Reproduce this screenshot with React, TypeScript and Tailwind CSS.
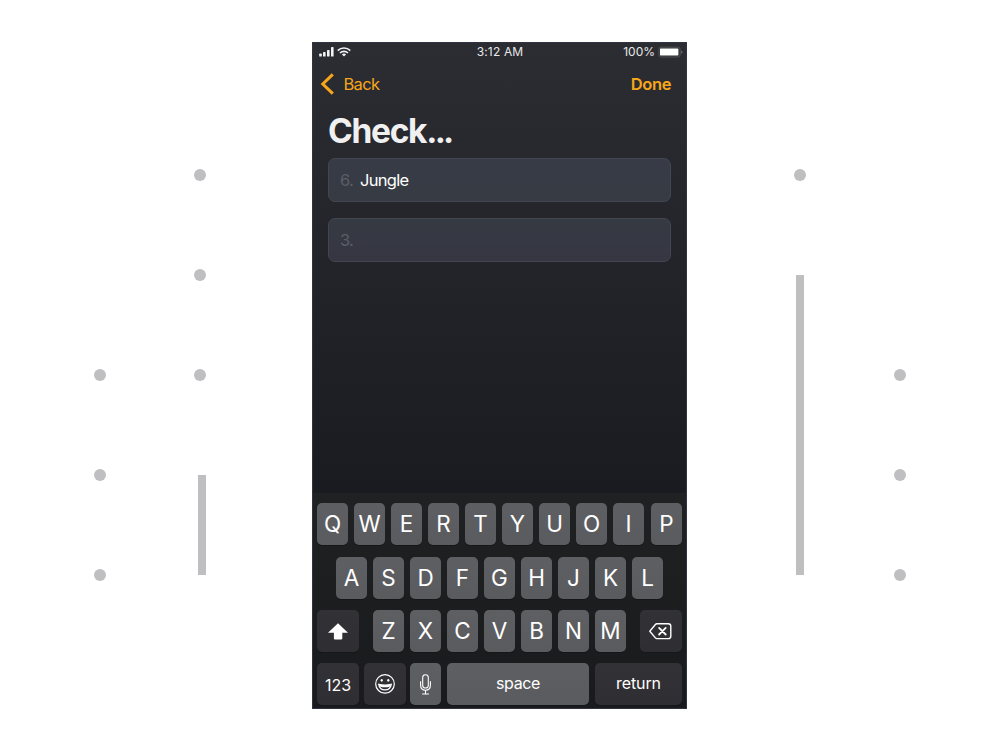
import React from "react";

const dot = "h-3 w-3 shrink-0 rounded-full bg-[#bfbfc1]";
const label = "flex items-center justify-center whitespace-nowrap";
const lightKey =
  "flex h-[42px] w-[31px] shrink-0 items-center justify-center rounded-[5px] bg-gradient-to-b from-[#5e5f62] to-[#5a5b5e] shadow-[0_1px_0_#151618]";
const darkKey =
  "flex h-[42px] shrink-0 items-center justify-center rounded-[5px] bg-gradient-to-b from-[#323135] to-[#2f2e33] shadow-[0_1px_0_#151618]";

function LetterKey({ letter }: { letter: string }) {
  return (
    <div className={lightKey}>
      <span className="text-[22.5px] font-normal leading-[42px] text-white">{letter}</span>
    </div>
  );
}

function StatusBar() {
  return (
    <div className="flex h-5 items-center justify-between pl-[6px] pr-[3px] text-[12px] leading-5 tracking-[0.1px] text-[#e8e8ea]">
      <div className="flex w-[120px] items-center gap-[3px]">
        <svg width="16" height="10" viewBox="0 0 16 10" fill="#f2f2f4">
          <rect x="0.2" y="6.6" width="2.6" height="3" rx="0.7" />
          <rect x="4" y="5" width="2.6" height="4.6" rx="0.7" />
          <rect x="8" y="3" width="2.6" height="6.6" rx="0.7" />
          <rect x="12" y="0.1" width="2.6" height="9.5" rx="0.7" />
        </svg>
        <svg className="-ml-px" width="14" height="10" viewBox="0 0 14 10" fill="none" stroke="#f2f2f4" strokeWidth="1.6">
          <path d="M0.7 3.6C4.2 0.1 9.8 0.1 13.3 3.6" />
          <path d="M3 6C5.2 3.8 8.8 3.8 11 6" />
          <path d="M7 9.5L4.9 7.4C6.1 6.3 7.9 6.3 9.1 7.4Z" fill="#f2f2f4" stroke="none" />
        </svg>
      </div>
      <span className="-translate-x-px tracking-[0.15px]">3:12 AM</span>
      <div className="flex w-[120px] items-center justify-end gap-[3px]">
        <span className="tracking-[0]">100%</span>
        <svg width="25" height="12" viewBox="0 0 25 12">
          <rect x="0.9" y="1.2" width="21.2" height="9.8" rx="2" fill="none" stroke="#505155" />
          <rect x="2" y="2.4" width="18.4" height="7" rx="0.6" fill="#fff" />
          <path d="M23.4 4.4C24.7 5 24.7 7.2 23.4 7.8Z" fill="#85868a" />
        </svg>
      </div>
    </div>
  );
}

function Phone() {
  return (
    <main className="mt-[42px] flex h-[667px] w-[375px] shrink-0 flex-col border border-[#323340] bg-gradient-to-b from-[#2c2d32] to-[#1a1b20] to-[68%]">
      <div className="-mt-px h-5">
        <StatusBar />
      </div>
      <nav className="flex h-11 items-center justify-between pl-[7px] pr-[15px] text-[16.5px] leading-[22px] text-[#f7a619]">
        <div className="flex items-center gap-[9.5px]">
          <svg width="14" height="22" viewBox="0 0 14 22" fill="none" stroke="#f7a619" strokeWidth="3">
            <path d="M12.8 1.4L2.8 11L12.8 20.6" />
          </svg>
          <span className="font-normal tracking-[-0.7px]">Back</span>
        </div>
        <span className="font-semibold tracking-[-0.4px]">Done</span>
      </nav>
      <h1 className="mt-[5px] flex h-[41px] pl-[15px] text-[33.5px] font-bold leading-[41px] text-[#f0f0f1]">
        <span className="tracking-[-1.3px]">
          Check<span className="tracking-[-2.8px]">...</span>
        </span>
      </h1>
      <section className="mt-[6px] flex h-[104px] flex-col gap-4 px-[15px]">
        <div className="flex h-11 items-center gap-[7px] rounded-[7px] border border-[#414651] bg-gradient-to-b from-[#373b47] to-[#373b43] pl-[11px] pt-px text-[16.5px] font-normal tracking-[-0.7px]">
          <span className="text-[#5c5e67]">6.</span>
          <span className="text-white">Jungle</span>
        </div>
        <div className="flex h-11 items-center rounded-[7px] border border-[#414651] bg-gradient-to-b from-[#363a42] to-[#363643] pl-[11px] pt-px text-[16.5px] font-normal tracking-[-0.7px]">
          <span className="text-[#5c5e67]">3.</span>
        </div>
      </section>
      <div className="mt-auto h-[215px] bg-gradient-to-b from-[#202122] to-[#191a1d] px-1 pt-[10px]">
        <div className="mb-3 flex justify-between">
          <div className="flex gap-[6px]">
            {[..."QWERTYUOI"].map((c) => (
              <LetterKey key={c} letter={c} />
            ))}
          </div>
          <LetterKey letter="P" />
        </div>
        <div className="mb-[11px] flex gap-[6px] pl-[19px]">
          {[..."ASDFGHJKL"].map((c) => (
            <LetterKey key={c} letter={c} />
          ))}
        </div>
        <div className="mb-[11px] flex justify-between">
          <div className={`${darkKey} w-[42px]`}>
            <svg width="20" height="17" viewBox="0 0 20 17" fill="#fff">
              <path d="M10 0.2L20 9.8H14.3V15.6Q14.3 16.4 13.5 16.4H6.7Q5.9 16.4 5.9 15.6V9.8H0Z" />
            </svg>
          </div>
          <div className="flex gap-[6px]">
            {[..."ZXCVBNM"].map((c) => (
              <LetterKey key={c} letter={c} />
            ))}
          </div>
          <div className={`${darkKey} w-[42px]`}>
            <svg className="-ml-px" width="23" height="17" viewBox="0 0 23 17" fill="none" stroke="#fff" strokeWidth="1.4" strokeLinejoin="round" strokeLinecap="round">
              <path d="M7.8 0.8H19.3Q21.8 0.8 21.8 3.2V13.2Q21.8 15.6 19.3 15.6H7.8Q7 15.6 6.4 14.9L0.8 8.2L6.4 1.5Q7 0.8 7.8 0.8Z" />
              <path d="M10.1 4.9L16.7 11.5M16.7 4.9L10.1 11.5" strokeWidth="1.8" />
            </svg>
          </div>
        </div>
        <div className="flex text-[16px] font-normal text-white">
          <div className={`${darkKey} w-[42px]`}>
            <span className="pt-[2px]">123</span>
          </div>
          <div className={`${darkKey} ml-[5px] w-[42px]`}>
            <svg width="20" height="20" viewBox="0 0 20 20" fill="none" stroke="#fff" strokeWidth="1.2">
              <circle cx="10" cy="9.9" r="9.3" />
              <ellipse cx="6.7" cy="6.3" rx="1.1" ry="1.4" fill="#fff" stroke="none" />
              <ellipse cx="13.3" cy="6.3" rx="1.1" ry="1.4" fill="#fff" stroke="none" />
              <path d="M3.7 10.3Q10 11.9 16.3 10.3C15.8 13.7 13.4 15.9 10 15.9S4.2 13.7 3.7 10.3Z" />
              <path d="M4.2 10.5Q10 12 15.8 10.5L15.2 12.5Q10 14.2 4.8 12.5Z" fill="#fff" stroke="none" />
            </svg>
          </div>
          <div className={`${lightKey} ml-1`}>
            <svg width="12" height="21" viewBox="0 0 12 21" fill="none" stroke="#fff" strokeWidth="1.1">
              <rect x="2.7" y="0.8" width="5.6" height="13.2" rx="2.8" />
              <path d="M0.6 7.2V11C0.6 14.2 2.5 16.2 5.5 16.2S10.4 14.2 10.4 11V7.2M5.5 16.2V20M2.1 20H8.9" />
            </svg>
          </div>
          <div className="ml-[6px] flex h-[42px] w-[142px] items-center justify-center rounded-[5px] bg-gradient-to-b from-[#5e5f62] to-[#5a5b5e] shadow-[0_1px_0_#151618]">
            <span className={`${label} pb-[2px] tracking-[-0.35px]`}>space</span>
          </div>
          <div className={`${darkKey} ml-[6px] w-[87px]`}>
            <span className={`${label} pb-[2px] tracking-[-0.1px]`}>return</span>
          </div>
        </div>
      </div>
    </main>
  );
}

export default function App() {
  return (
    <div className="flex h-[750px] w-[1000px] overflow-hidden bg-white font-['Inter','Liberation_Sans',sans-serif]">
      <aside className="flex w-[312px] shrink-0 items-start pl-[94px]">
        <div className="flex flex-col gap-[88px] pt-[369px]">
          <i className={dot} />
          <i className={dot} />
          <i className={dot} />
        </div>
        <div className="ml-[88px] flex flex-col items-end gap-[88px] pt-[169px]">
          <i className={dot} />
          <i className={dot} />
          <i className={dot} />
          <i className="mt-[6px] h-[100px] w-2 bg-[#bfbfc1]" />
        </div>
      </aside>
      <Phone />
      <aside className="flex flex-1 items-start pl-[107px]">
        <div className="flex flex-col items-center gap-[94px] pt-[169px]">
          <i className={dot} />
          <i className="h-[300px] w-2 bg-[#bfbfc1]" />
        </div>
        <div className="ml-[88px] flex flex-col gap-[88px] pt-[369px]">
          <i className={dot} />
          <i className={dot} />
          <i className={dot} />
        </div>
      </aside>
    </div>
  );
}
